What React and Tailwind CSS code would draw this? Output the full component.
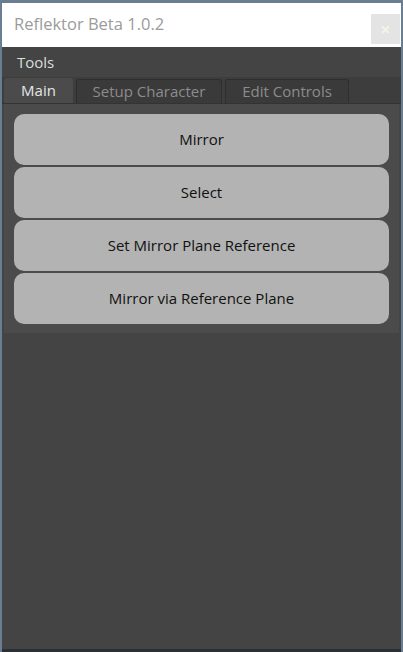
import React from "react";

const font = { fontFamily: '"Open Sans", "Noto Sans", sans-serif' };

export default function App() {
  const buttons = ["Mirror", "Select", "Set Mirror Plane Reference", "Mirror via Reference Plane"];
  return (
    <div className="w-[403px] h-[652px] bg-[#6b7d90] pt-[3px] pl-[2px] pr-[2px] flex flex-col" style={font}>
      <div className="flex-1 flex flex-col bg-[#444444] border-b-[3px] border-[#2b3036]">
        <div className="h-[44px] shrink-0 bg-white flex items-center justify-between pl-[12px] pr-[1px]">
          <span className="text-[16.5px] text-[#9b9b9b] mt-[-2px]">Reflektor Beta 1.0.2</span>
          <div className="w-[29px] h-[30px] bg-[#e4e4e4] flex items-center justify-center mt-[8px] text-[#f3f3e6] text-[18px] font-bold leading-none">×</div>
        </div>
        <div className="h-[30px] shrink-0 flex items-center pl-[15px] text-[15px] text-[#dddddd]">Tools</div>
        <div className="flex items-end h-[27px] shrink-0 bg-[#3d3d3d] pl-[2px] gap-[3px] border-b border-[#333]">
          <div className="w-[69px] h-[25px] bg-[#4b4b4b] rounded-t-[3px] flex items-center justify-center text-[15px] text-[#e6e6e6]">Main</div>
          <div className="w-[146px] h-[24px] bg-[#3a3a3a] border border-b-0 border-[#2e2e2e] rounded-t-[3px] flex items-center justify-center text-[15px] text-[#8c8c8c]">Setup Character</div>
          <div className="w-[124px] h-[24px] bg-[#3a3a3a] border border-b-0 border-[#2e2e2e] rounded-t-[3px] flex items-center justify-center text-[15px] text-[#8c8c8c]">Edit Controls</div>
        </div>
        <div className="mx-[2px] bg-[#4b4b4b] px-[10px] pt-[10px] pb-[9px] flex flex-col gap-[2px]">
          {buttons.map((b) => (
            <div key={b} className="h-[51px] rounded-[10px] bg-[#b3b3b3] flex items-center justify-center text-[15px] text-[#111111]">{b}</div>
          ))}
        </div>
        <div className="flex-1" />
      </div>
    </div>
  );
}
